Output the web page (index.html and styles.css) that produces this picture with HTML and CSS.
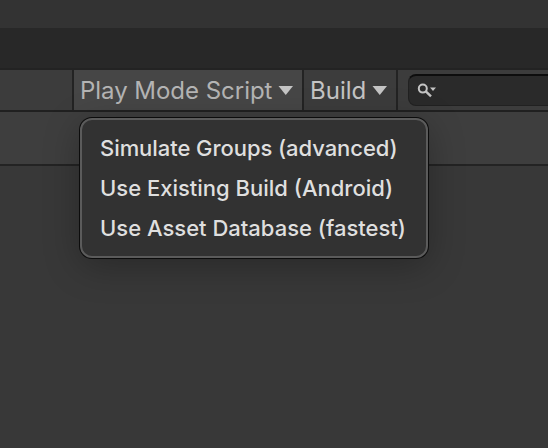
FILE: index.html
```html
<!DOCTYPE html>
<html lang="en">
<head>
<meta charset="utf-8">
<title>Addressables Groups</title>
<link rel="stylesheet" href="styles.css">
</head>
<body>
<div class="window">
  <div class="titlebar"></div>
  <div class="tabs"></div>
  <div class="toolbar">
    <div class="spacer"></div>
    <div class="button script"><span>Play Mode Script</span><svg class="arrow" viewBox="0 0 15 9"><path d="M0.5 0H15L7.75 9Z"/></svg>
      <div class="menu">
        <div class="item simulate">Simulate Groups (advanced)</div>
        <div class="item existing">Use Existing Build (Android)</div>
        <div class="item database">Use Asset Database (fastest)</div>
      </div>
    </div>
    <div class="button build"><span>Build</span><svg class="arrow" viewBox="0 0 15 9"><path d="M0.5 0H15L7.75 9Z"/></svg></div>
    <div class="search"><svg class="lens" viewBox="0 0 20 16"><circle cx="5.8" cy="5.6" r="4"/><path class="handle" d="M8.8 8.4L14 13.4"/><path class="caret" d="M13 4.4H19L16 8Z"/></svg></div>
  </div>
  <div class="header"></div>
  <div class="content"></div>
</div>
</body>
</html>
```
FILE: styles.css
```css
* { box-sizing: border-box; }
body { margin: 0; background: #383838; font-family: Inter, sans-serif; }
.window { display: flex; flex-direction: column; width: 548px; height: 448px; overflow: hidden; }
.titlebar { height: 28px; background: #333; }
.tabs { height: 42px; background: #282828; border-bottom: 2px solid #232323; }
.toolbar { display: flex; height: 42px; background: #3c3c3c; border-bottom: 2px solid #202020; }
.spacer { flex: none; width: 74px; border-right: 2px solid #232323; }
.button { display: flex; flex: none; align-items: center; height: 40px; padding-left: 6px; border-right: 2px solid #232323; color: #c4c4c4; font-size: 24px; line-height: 40px; white-space: nowrap; }
.button span { flex: none; padding-top: 2px; }
.script { position: relative; width: 230px; background: #464646; color: #b4b4b4; }
.script span { width: 198px; letter-spacing: -0.03px; }
.build { width: 94px; }
.build span { width: 62px; }
.arrow { flex: none; width: 15px; height: 9px; margin-top: 1px; fill: #c4c4c4; }
.search { display: flex; align-items: flex-start; width: 160px; height: 32px; margin: 4px 0 0 10px; padding: 7px 0 0 8px; flex: none; background: #2a2a2a; border: 1px solid #212121; border-top: 2px solid #0d0d0d; border-radius: 8px; }
.lens { width: 20px; height: 16px; fill: none; stroke: #c4c4c4; stroke-width: 2; }
.lens .handle { stroke-width: 2.4; }
.lens .caret { fill: #c4c4c4; stroke: none; }
.header { height: 54px; background: #3e3e3e; border-bottom: 2px solid #232323; }
.content { flex: 1; background: #383838; }
.menu { position: absolute; z-index: 1; left: 6px; top: 48px; width: 348px; height: 140px; padding: 8px 18px; background: #323232; border: 2px solid #5b5b5b; border-radius: 12px; box-shadow: 0 0 0 1px #0c0c0c, 0 8px 36px rgba(0, 0, 0, 0.28); color: #dfdfdf; font-size: 22px; font-weight: 500; }
.item { height: 40px; line-height: 40px; }
.simulate { letter-spacing: -0.06px; }
```
